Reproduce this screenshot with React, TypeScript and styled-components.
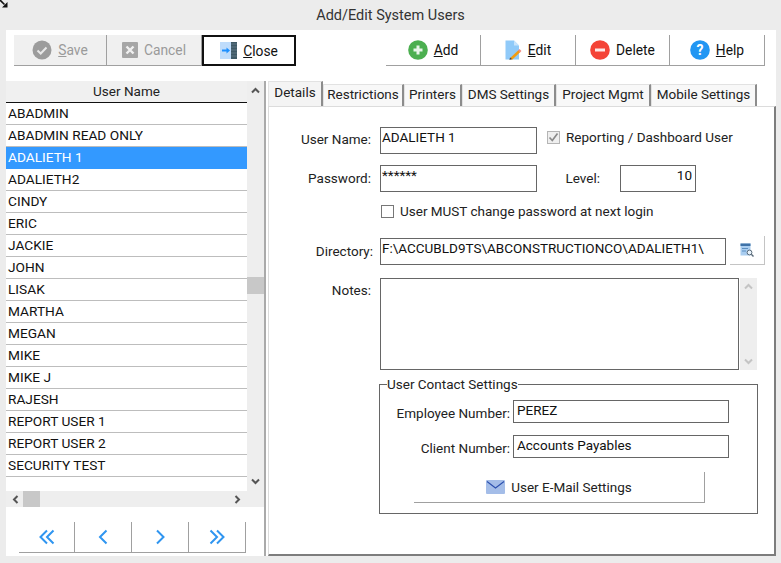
import React from 'react'
import styled, { createGlobalStyle } from 'styled-components'

const Global = createGlobalStyle`
    html, body {
        margin:0;
        padding:0;
        background:#ececec;
    }
    body {
        font-family:Roboto, "Liberation Sans", sans-serif;
        font-size:13.5px;
        color:#111;
    }
    * {
        box-sizing:border-box;
    }
`
const Window = styled.div`
    position:relative;
    width:781px;
    height:563px;
    background:#ececec;
    overflow:hidden;
    display:flex;
    flex-direction:column;
`
const Corner = styled.svg`
    position:absolute;
    left:0;
    top:0;
`
const TitleBar = styled.div`
    height:30px;
    display:flex;
    align-items:center;
    justify-content:center;
    color:#333;
    font-size:14.5px;
`
const Body = styled.div`
    margin-left:6px;
    width:770px;
    height:526px;
    background:white;
    display:flex;
    flex-direction:column;
`
const Toolbar = styled.div`
    height:51px;
    padding:5px 11px 0 8px;
    display:flex;
    justify-content:space-between;
`
const ButtonGroup = styled.div`
    display:flex;
    height:31px;
`
const ToolButton = styled.button<{ $width: number; $disabled?: boolean; $focused?: boolean }>`
    width:${p => p.$width}px;
    height:31px;
    padding:0;
    display:flex;
    align-items:center;
    justify-content:center;
    gap:6px;
    font:inherit;
    font-size:13.8px;
    outline:none;
    cursor:default;
    background:${p => (p.$disabled ? '#f0f0f0' : 'white')};
    color:${p => (p.$disabled ? '#9a9a9a' : '#111')};
    border:none;
    border-bottom:1px solid #a0a0a0;
    border-right:1px solid #a0a0a0;
    ${p => p.$focused && 'border:2px solid #111;'}
`
const Main = styled.div`
    flex:1;
    display:flex;
    min-height:0;
`
const LeftPane = styled.div`
    width:258px;
    display:flex;
    flex-direction:column;
`
const ListArea = styled.div`
    height:410px;
    display:flex;
`
const UserList = styled.div`
    width:241px;
`
const ListHeader = styled.div`
    height:22px;
    background:#f0f0f0;
    border-bottom:1px solid #111;
    text-align:center;
    line-height:20px;
    color:#222;
`
const Row = styled.div<{ $selected?: boolean }>`
    height:22px;
    padding-left:2px;
    font-size:13.7px;
    line-height:20px;
    white-space:nowrap;
    background:${p => (p.$selected ? '#3399ff' : 'white')};
    color:${p => (p.$selected ? 'white' : '#111')};
    border-bottom:1px solid ${p => (p.$selected ? '#3399ff' : '#bdbdbd')};
`
const VScroll = styled.div<{ $width?: number }>`
    width:${p => p.$width ?? 17}px;
    background:#eeeeee;
    display:flex;
    flex-direction:column;
    align-items:center;
    justify-content:space-between;
    padding:5px 0;
`
const VThumbSlot = styled.div`
    width:100%;
    flex:1;
    padding-top:182px;
`
const VThumb = styled.div`
    width:100%;
    height:17px;
    background:#c8c8c8;
`
const HScroll = styled.div`
    height:16px;
    background:#eeeeee;
    display:flex;
    align-items:center;
    padding:0 22px 0 5px;
    gap:3px;
`
const HThumb = styled.div`
    width:17px;
    height:16px;
    background:#c8c8c8;
`
const HSpacer = styled.div`
    flex:1;
`
const NavBar = styled.div`
    padding:15px 0 0 13px;
    display:flex;
`
const NavButton = styled.button<{ $width: number }>`
    width:${p => p.$width}px;
    height:31px;
    padding:0;
    display:flex;
    align-items:center;
    justify-content:center;
    background:white;
    border:none;
    border-bottom:1px solid #a0a0a0;
    border-right:1px solid #a0a0a0;
`
const Splitter = styled.div`
    width:2px;
    background:#aaaaaa;
`
const RightPane = styled.div`
    flex:1;
    margin-left:2px;
    display:flex;
    flex-direction:column;
`
const TabStrip = styled.div`
    height:25px;
    display:flex;
    align-items:flex-end;
`
const Tab = styled.div<{ $width: number; $active?: boolean }>`
    width:${p => p.$width}px;
    height:${p => (p.$active ? 25 : 22)}px;
    padding-bottom:4px;
    display:flex;
    align-items:center;
    justify-content:center;
    white-space:nowrap;
    color:#222;
    background:${p => (p.$active ? '#f4f4f4' : '#f8f8f8')};
    border-top:1px solid #e2e2e2;
    border-left:1px solid #e2e2e2;
    border-right:2px solid #8c8c8c;
`
const TabPanel = styled.div`
    flex:1;
    border-top:1px solid #dcdcdc;
    border-left:1px solid #dcdcdc;
    border-right:2px solid #7d7d7d;
    border-bottom:2px solid #7d7d7d;
    padding-top:20px;
`
const FormRow = styled.div<{ $top?: number }>`
    display:flex;
    align-items:flex-start;
    margin-top:${p => p.$top ?? 0}px;
`
const Label = styled.div<{ $width?: number; $line?: number }>`
    width:${p => p.$width ?? 102}px;
    text-align:right;
    line-height:${p => p.$line ?? 24}px;
    white-space:nowrap;
    color:#222;
    flex-shrink:0;
`
const Field = styled.div<{ $width: number; $height: number; $left?: number; $right?: boolean; $pad?: number }>`
    width:${p => p.$width}px;
    height:${p => p.$height}px;
    margin-left:${p => p.$left ?? 9}px;
    border:1px solid #666;
    padding:0 ${p => p.$pad ?? 1}px;
    line-height:18px;
    text-align:${p => (p.$right ? 'right' : 'left')};
    white-space:nowrap;
    overflow:hidden;
    background:white;
    flex-shrink:0;
`
const CheckLabel = styled.div<{ $left: number }>`
    display:flex;
    align-items:center;
    gap:6px;
    margin-left:${p => p.$left}px;
    line-height:20px;
    white-space:nowrap;
    color:#222;
`
const CheckBox = styled.span<{ $disabled?: boolean }>`
    width:13px;
    height:13px;
    display:flex;
    align-items:center;
    justify-content:center;
    border:1px solid ${p => (p.$disabled ? '#b5b5b5' : '#777')};
    background:${p => (p.$disabled ? '#efefef' : 'white')};
`
const BrowseButton = styled.button`
    width:35px;
    height:29px;
    margin:-2px 0 0 4px;
    padding:0;
    display:flex;
    align-items:center;
    justify-content:center;
    background:white;
    border:none;
    border-bottom:1px solid #c4c4c4;
    border-right:1px solid #c4c4c4;
`
const NotesScroll = styled(VScroll)`
    height:92px;
    margin-left:1px;
    padding:4px 0;
`
const Group = styled.fieldset`
    width:379px;
    height:139px;
    margin:5px 0 0 110px;
    padding:0;
    border:1px solid #666;
`
const GroupTitle = styled.legend`
    margin-left:7px;
    padding:0;
    line-height:18px;
    color:#222;
`
const MailButton = styled.button`
    width:291px;
    height:31px;
    margin:11px 0 0 34px;
    padding:0;
    display:flex;
    align-items:center;
    justify-content:center;
    gap:6px;
    font:inherit;
    color:#222;
    background:white;
    border:none;
    border-bottom:1px solid #a0a0a0;
    border-right:1px solid #a0a0a0;
`

const users = ['ABADMIN', 'ABADMIN READ ONLY', 'ADALIETH 1', 'ADALIETH2', 'CINDY', 'ERIC', 'JACKIE', 'JOHN', 'LISAK', 'MARTHA', 'MEGAN', 'MIKE', 'MIKE J', 'RAJESH', 'REPORT USER 1', 'REPORT USER 2', 'SECURITY TEST']
const tabs = [
    { label: 'Details', width: 55, active: true },
    { label: 'Restrictions', width: 81 },
    { label: 'Printers', width: 58 },
    { label: 'DMS Settings', width: 94 },
    { label: 'Project Mgmt', width: 95 },
    { label: 'Mobile Settings', width: 106 },
]

const Chevron = ({ dir, color = '#555' }: { dir: 'up' | 'down' | 'left' | 'right'; color?: string }) => {
    const rotate = { up: 0, right: 90, down: 180, left: 270 }[dir]
    return (
        <svg width="9" height="9" viewBox="0 0 9 9" style={{ transform: `rotate(${rotate}deg)` }}>
            <path d="M1 6.5 L4.5 3 L8 6.5" fill="none" stroke={color} strokeWidth="2" />
        </svg>
    )
}

const NavArrow = ({ d }: { d: string }) => (
    <svg width="18" height="18" viewBox="0 0 18 18">
        <path d={d} fill="none" stroke="#2f95f0" strokeWidth="2" />
    </svg>
)

const SaveIcon = () => (
    <svg width="20" height="20" viewBox="0 0 20 20">
        <circle cx="10" cy="10" r="9.5" fill="#9c9c9c" />
        <path d="M5.5 10.5 L8.7 13.5 L14.5 7.5" fill="none" stroke="#e8e8e8" strokeWidth="2" />
    </svg>
)
const CancelIcon = () => (
    <svg width="16" height="16" viewBox="0 0 16 16">
        <rect width="16" height="16" rx="1" fill="#a6a6a6" />
        <path d="M4.5 4.5 L11.5 11.5 M11.5 4.5 L4.5 11.5" stroke="#f0f0f0" strokeWidth="2.4" />
    </svg>
)
const CloseIcon = () => (
    <svg width="17" height="17" viewBox="0 0 17 17">
        <rect width="11" height="17" fill="#bfdcfb" />
        <rect x="11" width="6" height="17" fill="#3f5966" />
        <path d="M11 2 H17 M11 5 H17 M11 8 H17 M11 11 H17 M11 14 H17" stroke="#5e7783" strokeWidth="1" />
        <path d="M2 8.5 H7" stroke="#1e90ff" strokeWidth="2" />
        <path d="M6.5 5.5 L10 8.5 L6.5 11.5 Z" fill="#1e90ff" />
    </svg>
)
const AddIcon = () => (
    <svg width="20" height="20" viewBox="0 0 20 20">
        <circle cx="10" cy="10" r="9.8" fill="#4caf50" />
        <path d="M10 5.5 V14.5 M5.5 10 H14.5" stroke="#e8f5e9" strokeWidth="3" />
    </svg>
)
const EditIcon = () => (
    <svg width="17" height="20" viewBox="0 0 17 20">
        <path d="M0.5 0.5 H9 L14 5.5 V19.5 H0.5 Z" fill="#90caf9" />
        <path d="M9 0.5 V5.5 H14 Z" fill="#c9e4fb" />
        <path d="M6 19 L14.5 11" stroke="#f39c12" strokeWidth="2.6" />
        <path d="M14 11.5 L15.5 10" stroke="#ef8a80" strokeWidth="2.6" />
        <path d="M4.5 20 L5 17.5 L7 19 Z" fill="#444" />
    </svg>
)
const DeleteIcon = () => (
    <svg width="20" height="20" viewBox="0 0 20 20">
        <circle cx="10" cy="10" r="9.8" fill="#f44336" />
        <rect x="5" y="8.5" width="10" height="3" fill="#fde8e6" />
    </svg>
)
const HelpIcon = () => (
    <svg width="20" height="20" viewBox="0 0 20 20">
        <circle cx="10" cy="10" r="9.8" fill="#2196f3" />
        <text x="10" y="15" textAnchor="middle" fontFamily="Roboto" fontWeight="700" fontSize="14" fill="white">?</text>
    </svg>
)
const BrowseIcon = () => (
    <svg width="14" height="14" viewBox="0 0 14 14">
        <rect x="0.5" y="0.5" width="10" height="12" fill="#a9cdf0" />
        <rect x="0.5" y="0.5" width="10" height="2.5" fill="#3f72a8" />
        <path d="M2 5.5 H8 M2 8 H6" stroke="#5d8fc0" />
        <circle cx="9.5" cy="9.5" r="2.4" fill="#e8f2fb" stroke="#5a6b7a" />
        <path d="M11.3 11.3 L13.5 13.5" stroke="#5a6b7a" strokeWidth="1.4" />
    </svg>
)
const MailIcon = () => (
    <svg width="19" height="14" viewBox="0 0 19 14">
        <rect width="19" height="14" rx="1" fill="#a4bde8" />
        <path d="M1 1.5 L9.5 8 L18 1.5" fill="none" stroke="#2b4fae" strokeWidth="1.1" />
    </svg>
)
const CheckMark = () => (
    <svg width="11" height="11" viewBox="0 0 11 11">
        <path d="M1.5 5.5 L4.3 8.5 L9.5 1.5" fill="none" stroke="#8a8a8a" strokeWidth="1.7" />
    </svg>
)

const App = () => {
    return (
        <Window>
            <Global />
            <Corner width="8" height="8" viewBox="0 0 8 8">
                <path d="M0 0 L4.5 4.5" stroke="#111" strokeWidth="1.6" />
                <path d="M7.5 2 V7.5 H2 Z" fill="#111" />
            </Corner>
            <TitleBar>Add/Edit System Users</TitleBar>
            <Body>
                <Toolbar>
                    <ButtonGroup>
                        <ToolButton $width={93} $disabled><SaveIcon /><span><u>S</u>ave</span></ToolButton>
                        <ToolButton $width={95} $disabled><CancelIcon /><span>Cancel</span></ToolButton>
                        <ToolButton $width={94} $focused><CloseIcon /><span><u>C</u>lose</span></ToolButton>
                    </ButtonGroup>
                    <ButtonGroup>
                        <ToolButton $width={95}><AddIcon /><span><u>A</u>dd</span></ToolButton>
                        <ToolButton $width={95}><EditIcon /><span><u>E</u>dit</span></ToolButton>
                        <ToolButton $width={94}><DeleteIcon /><span>Delete</span></ToolButton>
                        <ToolButton $width={95}><HelpIcon /><span><u>H</u>elp</span></ToolButton>
                    </ButtonGroup>
                </Toolbar>
                <Main>
                    <LeftPane>
                        <ListArea>
                            <UserList>
                                <ListHeader>User Name</ListHeader>
                                {users.map(u => (
                                    <Row key={u} $selected={u === 'ADALIETH 1'}>{u}</Row>
                                ))}
                            </UserList>
                            <VScroll>
                                <Chevron dir="up" />
                                <VThumbSlot><VThumb /></VThumbSlot>
                                <Chevron dir="down" />
                            </VScroll>
                        </ListArea>
                        <HScroll>
                            <Chevron dir="left" />
                            <HThumb />
                            <HSpacer />
                            <Chevron dir="right" />
                        </HScroll>
                        <NavBar>
                            <NavButton $width={56}><NavArrow d="M9 2.5 L2.5 9 L9 15.5 M15.5 2.5 L9 9 L15.5 15.5" /></NavButton>
                            <NavButton $width={57}><NavArrow d="M12.5 2.5 L6 9 L12.5 15.5" /></NavButton>
                            <NavButton $width={57}><NavArrow d="M6 2.5 L12.5 9 L6 15.5" /></NavButton>
                            <NavButton $width={57}><NavArrow d="M2.5 2.5 L9 9 L2.5 15.5 M9 2.5 L15.5 9 L9 15.5" /></NavButton>
                        </NavBar>
                    </LeftPane>
                    <Splitter />
                    <RightPane>
                        <TabStrip>
                            {tabs.map(t => (
                                <Tab key={t.label} $width={t.width} $active={t.active}>{t.label}</Tab>
                            ))}
                        </TabStrip>
                        <TabPanel>
                            <FormRow>
                                <Label>User Name:</Label>
                                <Field $width={157} $height={27}>ADALIETH 1</Field>
                                <CheckLabel $left={10}><CheckBox $disabled><CheckMark /></CheckBox>Reporting / Dashboard User</CheckLabel>
                            </FormRow>
                            <FormRow $top={11}>
                                <Label $line={26}>Password:</Label>
                                <Field $width={157} $height={27}>******</Field>
                                <Label $width={63} $line={26}>Level:</Label>
                                <Field $width={76} $height={27} $left={20} $right $pad={3}>10</Field>
                            </FormRow>
                            <FormRow $top={9}>
                                <CheckLabel $left={112}><CheckBox />User MUST change password at next login</CheckLabel>
                            </FormRow>
                            <FormRow $top={17}>
                                <Label $width={104} $line={26}>Directory:</Label>
                                <Field $width={346} $height={27} $left={7}>F:\ACCUBLD9TS\ABCONSTRUCTIONCO\ADALIETH1\</Field>
                                <BrowseButton><BrowseIcon /></BrowseButton>
                            </FormRow>
                            <FormRow $top={13}>
                                <Label>Notes:</Label>
                                <Field $width={359} $height={92} />
                                <NotesScroll>
                                    <Chevron dir="up" color="#c4c4c4" />
                                    <Chevron dir="down" color="#c4c4c4" />
                                </NotesScroll>
                            </FormRow>
                            <Group>
                                <GroupTitle>User Contact Settings</GroupTitle>
                                <FormRow $top={7}>
                                    <Label $width={130} $line={26}>Employee Number:</Label>
                                    <Field $width={216} $height={23} $left={3} $pad={3}>PEREZ</Field>
                                </FormRow>
                                <FormRow $top={9}>
                                    <Label $width={130} $line={26}>Client Number:</Label>
                                    <Field $width={216} $height={23} $left={3} $pad={3}>Accounts Payables</Field>
                                </FormRow>
                                <MailButton><MailIcon />User E-Mail Settings</MailButton>
                            </Group>
                        </TabPanel>
                    </RightPane>
                </Main>
            </Body>
        </Window>
    )
}

export default App
